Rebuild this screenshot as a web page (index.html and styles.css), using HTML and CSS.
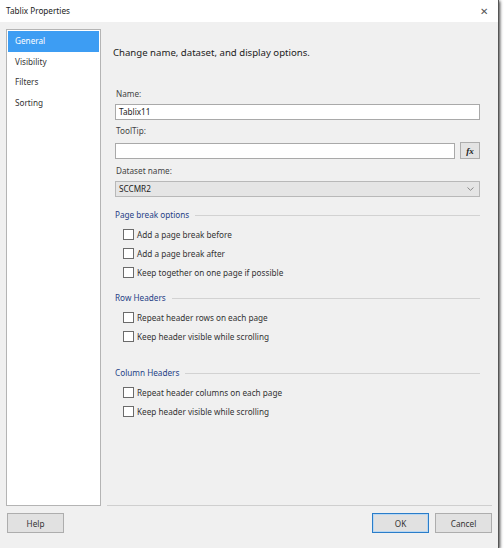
FILE: index.html
```html
<!DOCTYPE html>
<html lang="en">
<head>
    <meta charset="UTF-8">
    <title>Tablix Properties</title>
    <link rel="stylesheet" href="styles.css">
</head>
<body>

    <div class="janela">
        <!-- Barra de título -->
        <div class="titulo">
            <span>Tablix Properties</span>
            <span class="fechar">&#x2715;</span>
        </div>

        <div class="corpo">
            <!-- Navegação -->
            <ul class="nav">
                <li class="ativo">General</li>
                <li>Visibility</li>
                <li>Filters</li>
                <li>Sorting</li>
            </ul>

            <!-- Conteúdo -->
            <div class="conteudo">
                <h3>Change name, dataset, and display options.</h3>

                <label class="rotulo">Name:</label>
                <div class="campo">Tablix11</div>

                <label class="rotulo rotulo-tip">ToolTip:</label>
                <div class="linha-campo">
                    <div class="campo"></div>
                    <button class="fx">fx</button>
                </div>

                <label class="rotulo">Dataset name:</label>
                <div class="campo select">
                    <span>SCCMR2</span>
                    <svg width="7" height="4" viewBox="0 0 7 4"><path d="M0.5 0.5 L3.5 3.3 L6.5 0.5" fill="none" stroke="#8a8a8a" stroke-width="1"/></svg>
                </div>

                <div class="grupo">
                    <div class="grupo-titulo">Page break options</div>
                    <div class="check"><span class="caixa"></span>Add a page break before</div>
                    <div class="check"><span class="caixa"></span>Add a page break after</div>
                    <div class="check"><span class="caixa"></span>Keep together on one page if possible</div>
                </div>

                <div class="grupo">
                    <div class="grupo-titulo">Row Headers</div>
                    <div class="check"><span class="caixa"></span>Repeat header rows on each page</div>
                    <div class="check"><span class="caixa"></span>Keep header visible while scrolling</div>
                </div>

                <div class="grupo grupo-col">
                    <div class="grupo-titulo">Column Headers</div>
                    <div class="check"><span class="caixa"></span>Repeat header columns on each page</div>
                    <div class="check"><span class="caixa"></span>Keep header visible while scrolling</div>
                </div>
            </div>
        </div>

        <!-- Botões -->
        <div class="rodape">
            <button class="btn">Help</button>
            <div class="direita">
                <button class="btn ok">OK</button>
                <button class="btn">Cancel</button>
            </div>
        </div>
    </div>

</body>
</html>
```

FILE: styles.css
```css
body {
    margin: 0;
    padding: 0;
    background: #ffffff;
    font-family: 'Noto Sans', 'Open Sans', sans-serif;
    font-size: 8.2px;
    line-height: 12px;
    color: #333;
}

.janela {
    width: 499px;
    height: 548px;
    background: #f0f0f0;
    display: flex;
    flex-direction: column;
    box-shadow: 1px 1px 3px rgba(0, 0, 0, 0.75);
    border-right: 1px solid #555;
    box-sizing: border-box;
}

/* Barra de título */
.titulo {
    height: 22px;
    background: #fff;
    display: flex;
    align-items: center;
    justify-content: space-between;
    padding: 0 10px 0 6px;
    color: #222;
}

.titulo .fechar {
    font-size: 10px;
    color: #555;
}

/* Corpo */
.corpo {
    display: flex;
    padding: 7px 6px 0 6px;
    height: 484px;
    box-sizing: border-box;
}

.nav {
    list-style: none;
    margin: 0;
    padding: 1px;
    width: 95px;
    background: #fff;
    border: 1px solid #b4b4b4;
    box-sizing: border-box;
}

.nav li {
    height: 20.5px;
    line-height: 20px;
    padding-left: 7px;
    color: #333;
}

.nav li.ativo {
    background: #3d9df3;
    color: #fff;
}

.conteudo {
    flex: 1;
    margin-left: 6px;
    padding: 17px 12px 0 8px;
    border-bottom: 1px solid #cfcfcf;
    display: flex;
    flex-direction: column;
}

.conteudo h3 {
    margin: 0 0 28px -2px;
    font-size: 9.6px;
    line-height: 14px;
    font-weight: normal;
    color: #222;
}

.rotulo {
    display: block;
    margin-left: 1px;
    margin-bottom: 4px;
    color: #444;
}

.rotulo-tip {
    margin-top: 1px;
    margin-bottom: 5px;
}

.campo {
    height: 16px;
    background: #fff;
    border: 1px solid #a9a9a9;
    box-sizing: border-box;
    padding-left: 3px;
    line-height: 14px;
    margin-bottom: 4px;
    color: #222;
}

.linha-campo {
    display: flex;
    gap: 5px;
    margin-bottom: 6px;
}

.linha-campo .campo {
    flex: 1;
    margin: 1px 0 0 0;
}

.fx {
    width: 20px;
    height: 17px;
    background: #e3e3e3;
    border: 1px solid #adadad;
    padding: 0;
    font-family: 'Liberation Serif', serif;
    font-style: italic;
    font-weight: bold;
    font-size: 9px;
    color: #222;
}

.select {
    background: #e5e5e5;
    border-color: #b8b8b8;
    display: flex;
    align-items: center;
    justify-content: space-between;
    padding-right: 5px;
    margin-bottom: 12px;
}

/* Grupos de opções */
.grupo {
    margin-bottom: 10px;
}

.grupo-col {
    margin-top: 11px;
}

.grupo-titulo {
    display: flex;
    align-items: center;
    gap: 6px;
    color: #263f86;
    margin-bottom: 4px;
}

.grupo-titulo::after {
    content: "";
    flex: 1;
    height: 1px;
    background: #d2d2d2;
}

.check {
    display: flex;
    align-items: center;
    gap: 3px;
    height: 19px;
    padding-left: 8px;
    color: #333;
}

.caixa {
    width: 9px;
    height: 9px;
    background: #fff;
    border: 1px solid #6b6b6b;
}

/* Rodapé */
.rodape {
    display: flex;
    justify-content: space-between;
    padding: 7px 6px 0 7px;
}

.direita {
    display: flex;
    gap: 6px;
}

.btn {
    width: 57px;
    height: 20px;
    background: #e1e1e1;
    border: 1px solid #adadad;
    font-family: 'Noto Sans', 'Open Sans', sans-serif;
    font-size: 8.2px;
    color: #333;
    padding: 0;
}

.btn.ok {
    border: 1px solid #2a7dc9;
    box-shadow: inset 0 0 0 1px #b9d7f2;
}
```
